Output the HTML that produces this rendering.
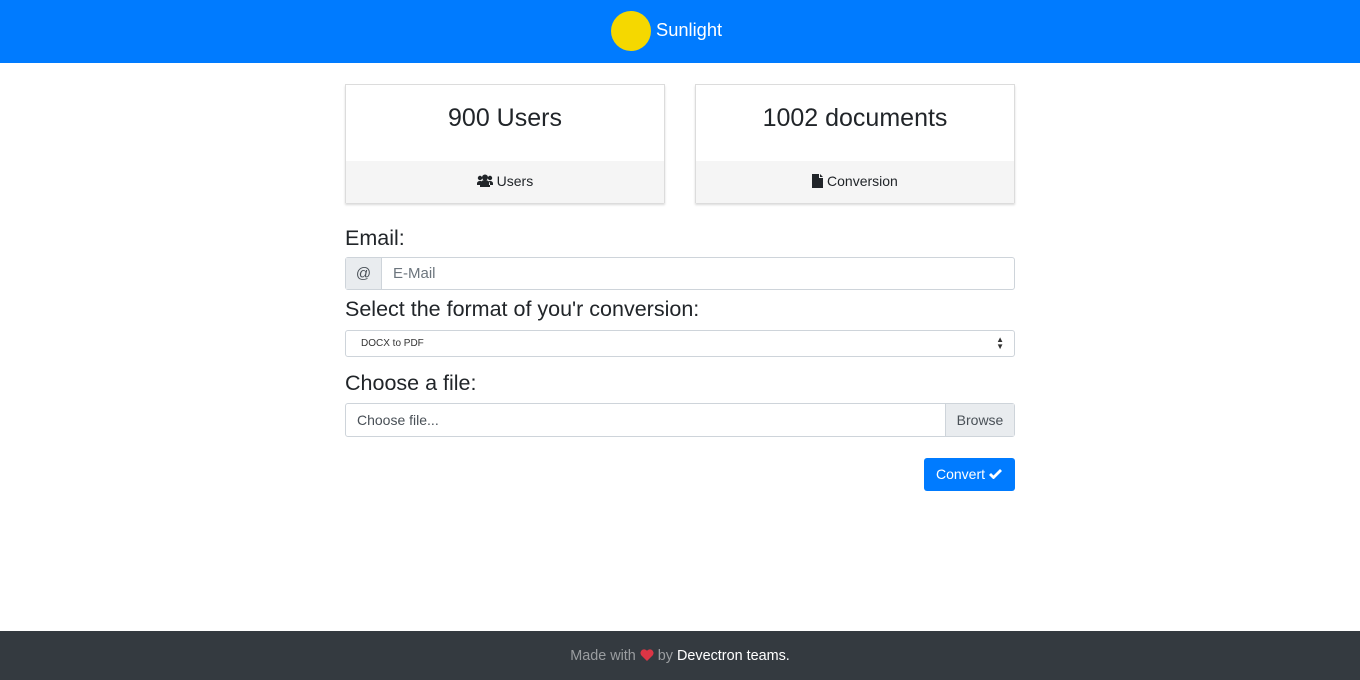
<!DOCTYPE html>
<html><head><style>
*{box-sizing:border-box;margin:0;padding:0}
body{width:1360px;height:680px;position:relative;font-family:"Liberation Sans",sans-serif;color:#212529;background:#fff;overflow:hidden}
.nav{position:absolute;left:0;top:0;width:1360px;height:63px;background:#007bff}
.sun{position:absolute;left:611px;top:11px;width:40px;height:40px;border-radius:50%;background:#f5d800}
.brand{position:absolute;left:656px;top:19px;color:#fff;font-size:18.3px}
.card{position:absolute;top:84px;width:320px;height:119px;border:1px solid #dcdcdc;box-shadow:0 2px 2px rgba(0,0,0,.15)}
.card .b{height:76px;text-align:center;font-size:25px;padding-top:19px}
.card .f{height:42px;background:#f5f5f5;text-align:center;font-size:14px;padding-top:12px}
.lbl{position:absolute;left:345px;font-size:21.5px}
.box{position:absolute;left:345px;width:670px;border:1px solid #ced4da;border-radius:3px;background:#fff}
.btn{position:absolute;left:924px;top:458px;width:91px;height:33px;background:#007bff;border-radius:3px;color:#fff;font-size:14px;padding:8px 0 0 12px}
.foot{position:absolute;left:0;top:631px;width:1360px;height:49px;background:#343a40;text-align:center;font-size:14.4px;color:#9a9da0;padding-top:17px}
</style></head><body>
<div class="nav"><div class="sun"></div><div class="brand">Sunlight</div></div>
<div class="card" style="left:345px"><div class="b">900 Users</div><div class="f"><svg width="16" height="13" viewBox="0 0 16 13" style="vertical-align:-1px"><circle cx="8" cy="3.5" r="3" fill="#212529"/><circle cx="3" cy="4" r="2.2" fill="#212529"/><circle cx="13" cy="4" r="2.2" fill="#212529"/><path d="M3 13V10a5 4 0 0 1 10 0v3z M0 11V9a3 3 0 0 1 3-2h1v4z M16 11V9a3 3 0 0 0-3-2h-1v4z" fill="#212529"/></svg> Users</div></div>
<div class="card" style="left:695px"><div class="b">1002 documents</div><div class="f"><svg width="11" height="14" viewBox="0 0 11 14" style="vertical-align:-2px"><path d="M0 0h7v4h4v10H0z M8 0l3 3H8z" fill="#212529"/></svg> Conversion</div></div>
<div class="lbl" style="top:226px">Email:</div>
<div class="box" style="top:257px;height:33px"><div style="position:absolute;left:0;top:0;width:36px;height:31px;background:#e9ecef;border-right:1px solid #ced4da;font-size:15px;color:#495057;text-align:center;padding-top:7px">@</div><div style="position:absolute;left:47px;top:7px;font-size:15px;color:#6c757d">E-Mail</div></div>
<div class="lbl" style="top:297px">Select the format of you'r conversion:</div>
<div class="box" style="top:330px;height:27px"><div style="position:absolute;left:15px;top:7px;font-size:10px;color:#333">DOCX to PDF</div><div style="position:absolute;right:10px;top:5px;font-size:8px;line-height:7px;color:#333">▲<br>▼</div></div>
<div class="lbl" style="top:371px">Choose a file:</div>
<div class="box" style="top:403px;height:34px"><div style="position:absolute;left:11px;top:8px;font-size:14px;color:#495057">Choose file...</div><div style="position:absolute;right:0;top:0;width:69px;height:32px;background:#e9ecef;border-left:1px solid #ced4da;font-size:14px;color:#495057;text-align:center;padding-top:8px">Browse</div></div>
<div class="btn">Convert <svg width="13" height="10" viewBox="0 0 13 10" style="vertical-align:0"><path d="M1 5l3.5 3.5L12 1" stroke="#fff" stroke-width="2.8" fill="none"/></svg></div>
<div class="foot">Made with <svg width="14" height="12" viewBox="0 0 14 12" style="vertical-align:-1px"><path d="M7 12L1.2 6.2A3.4 3.4 0 0 1 7 1.8a3.4 3.4 0 0 1 5.8 4.4z" fill="#dc3545"/></svg> by <span style="color:#fff">Devectron teams.</span></div>
</body></html>
